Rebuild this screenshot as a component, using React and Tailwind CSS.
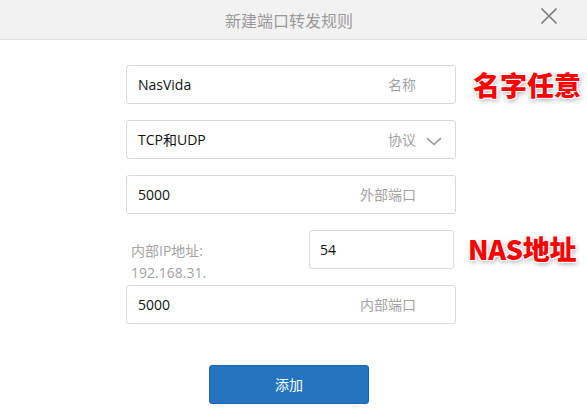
import React from "react";

const FONT = "font-['Open_Sans','Noto_Sans_CJK_SC',sans-serif]";
const ANNO =
  "text-[27px] leading-none font-black text-[#ff0000] font-['Noto_Sans_CJK_SC',sans-serif] [text-shadow:1px_1px_0_#fff,-1px_-1px_0_#fff,1px_-1px_0_#fff,-1px_1px_0_#fff,0_0_3px_#fff,1px_2px_5px_rgba(0,0,0,0.4)]";

function Field({ value, label, chevron }) {
  return (
    <div
      className={`w-[330px] h-[39px] border border-[#d9d9d9] rounded-[3px] flex items-center pl-[11px] ${
        chevron ? "pr-[13px]" : "pr-[39px]"
      }`}
    >
      <span className="text-[14px] text-[#111]">{value}</span>
      <span className="ml-auto text-[14px] text-[#a3a3a3]">{label}</span>
      {chevron && (
        <svg width="16" height="9" viewBox="0 0 16 9" className="ml-[10px] mt-[3px]">
          <path d="M1 1.2 L8 7.5 L15 1.2" fill="none" stroke="#999" strokeWidth="1.6" />
        </svg>
      )}
    </div>
  );
}

export default function App() {
  return (
    <div className={`w-[587px] h-[418px] bg-white overflow-hidden ${FONT}`}>
      <div className="h-[40px] bg-[#f2f2f2] border-b border-[#e2e2e2] flex items-center">
        <span className="ml-[225px] text-[16px] text-[#9a9a9a] font-['Noto_Sans_CJK_SC',sans-serif]">
          新建端口转发规则
        </span>
        <svg width="18" height="18" viewBox="0 0 18 18" className="ml-auto mr-[29px] mt-[-8px]">
          <path d="M1.5 1.5 L16.5 16.5 M16.5 1.5 L1.5 16.5" stroke="#7a7a7a" strokeWidth="1.6" />
        </svg>
      </div>

      <div className="pl-[126px] pt-[25px] flex flex-col">
        <div className="flex items-center">
          <Field value="NasVida" label="名称" />
          <span className={`ml-[17px] ${ANNO}`}>名字任意</span>
        </div>

        <div className="flex items-center mt-4">
          <Field value="TCP和UDP" label="协议" chevron />
        </div>

        <div className="flex items-center mt-4">
          <Field value="5000" label="外部端口" />
        </div>

        <div className="flex items-start mt-4 h-[39px]">
          <div className="w-[183px] pl-[5px] pt-[10px] text-[14px] leading-[22px] text-[#a3a3a3]">
            <div>内部IP地址:</div>
            <div>192.168.31.</div>
          </div>
          <div className="w-[145px] h-[39px] border border-[#d9d9d9] rounded-[3px] flex items-center pl-[10px]">
            <span className="text-[14px] text-[#111]">54</span>
          </div>
          <span className={`ml-[14px] mt-[5px] tracking-[-0.3px] ${ANNO}`}>NAS地址</span>
        </div>

        <div className="flex items-center mt-4">
          <Field value="5000" label="内部端口" />
        </div>

        <button className="mt-[41px] ml-[83px] w-[160px] h-[39px] bg-[#2574c0] border border-[#1b63ab] rounded-[3px] text-white text-[14px] flex items-center justify-center font-['Noto_Sans_CJK_SC',sans-serif]">
          添加
        </button>
      </div>
    </div>
  );
}
